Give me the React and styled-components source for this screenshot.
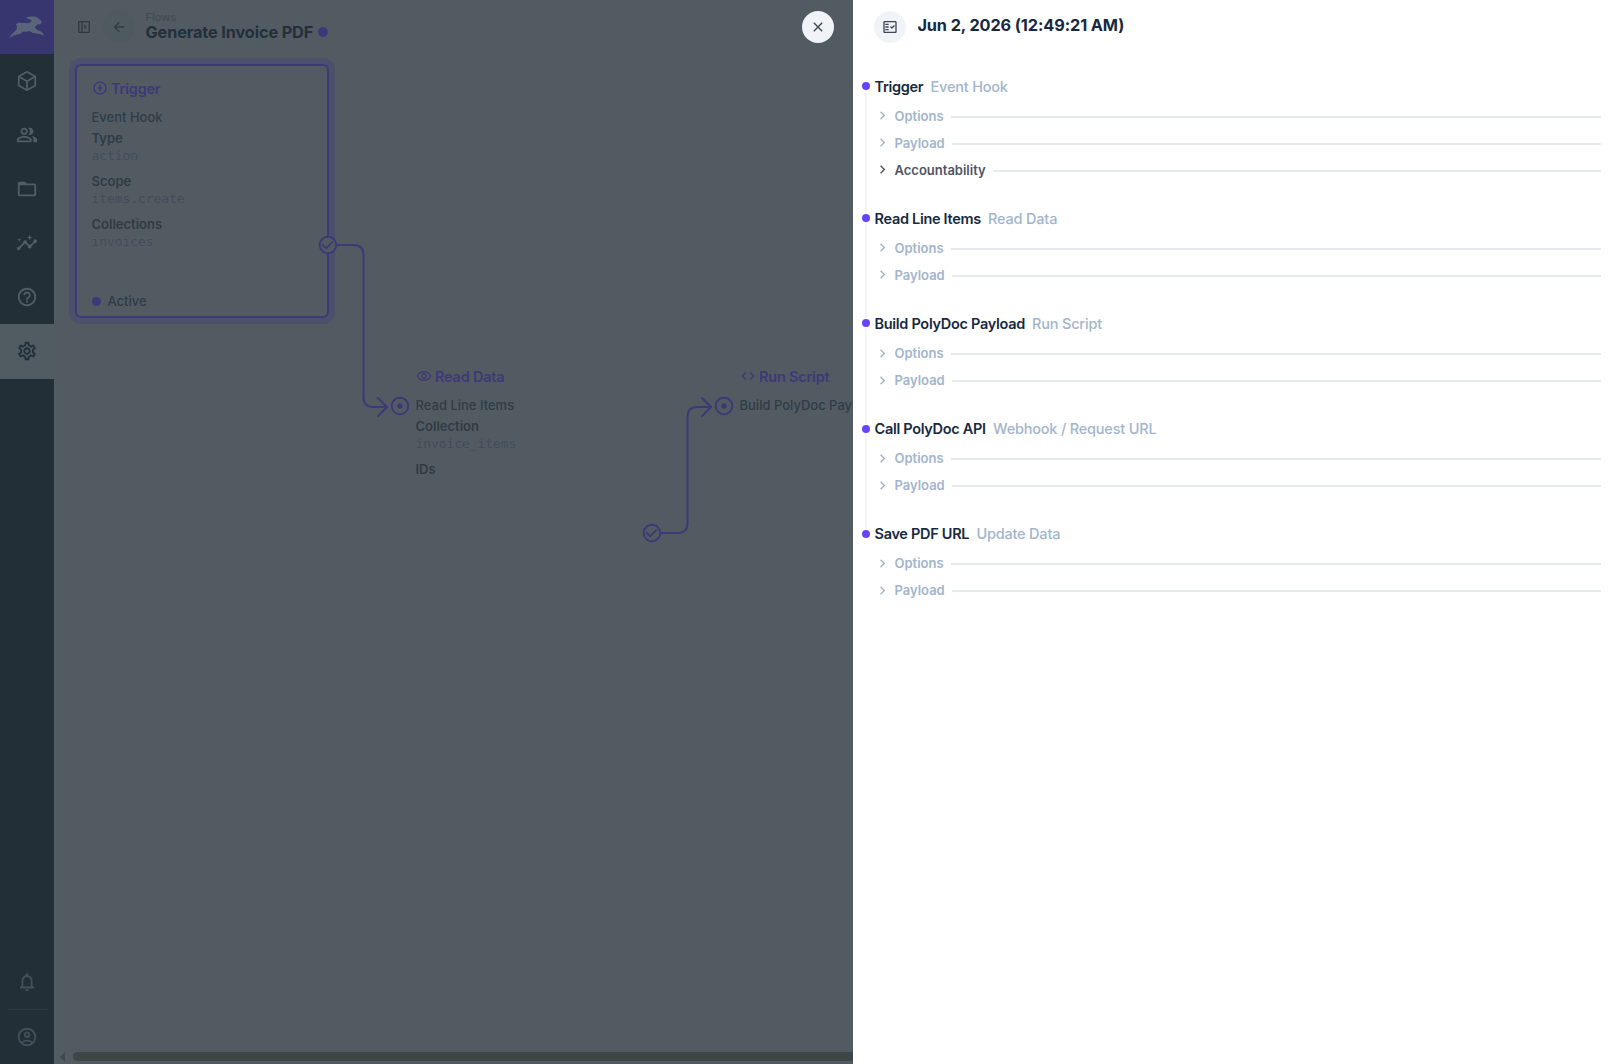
import React from "react"
import styled, { createGlobalStyle } from "styled-components";
import {
  MdOutlinePeopleAlt,
  MdFolderOpen,
  MdInsights,
  MdHelpOutline,
  MdOutlineSettings,
  MdNotificationsNone,
  MdOutlineAccountCircle,
  MdArrowBack,
  MdOutlineRemoveRedEye,
  MdCode,
  MdCheckCircleOutline,
  MdAdjust,
  MdClose,
  MdOutlineFactCheck,
  MdChevronRight,
} from "react-icons/md";

const primary = "#3b3a78"
const pageBackground = "#525b62"
const sansFont = "Inter, sans-serif"
const monoFont = "'DejaVu Sans Mono', monospace"

const steps = [
  { name: "Trigger", type: "Event Hook", rows: ["Options", "Payload", "Accountability"] },
  { name: "Read Line Items", type: "Read Data", rows: ["Options", "Payload"] },
  { name: "Build PolyDoc Payload", type: "Run Script", rows: ["Options", "Payload"] },
  { name: "Call PolyDoc API", type: "Webhook / Request URL", rows: ["Options", "Payload"] },
  { name: "Save PDF URL", type: "Update Data", rows: ["Options", "Payload"] },
]

function RabbitLogo() {
  return (
    <svg width="36" height="23" viewBox="0 0 36 23" fill="#5a657c">
      <path d="M7 8Q9 6.200 12 6.800L19 7.300Q22.500 6.500 23 4.500Q20 2.800 16.800 1.800Q21 0 25 .5Q29 1 30.500 3.500Q33 4.500 32.500 7Q32 8.800 28.500 8.600Q26.500 9.500 26 11.500Q27 13.800 31 15Q34 16 35 19.600Q30 17.800 27 17.600Q23 17 20.500 15Q18 15.800 14.500 15.600Q12 18.400 7 18.800Q3.500 19.500 .4 22Q1.500 18.800 4.500 16.800Q7.500 14.500 8 12.300Q7 11.500 8.200 9.800Q7 10 7 8Z" />
    </svg>
  )
}

function BoxIcon() {
  return (
    <svg width="22" height="22" viewBox="0 0 24 24" fill="none" stroke="currentColor" strokeWidth="1.9" strokeLinejoin="round">
      <path d="M12 2l9 5v10l-9 5-9-5V7z" />
      <path d="M3.500 7.300l8.500 4.900 8.500-4.900M12 12.200V22" />
    </svg>
  )
}

function PanelOpenIcon() {
  return (
    <svg width="16" height="16" viewBox="0 0 24 24" fill="none" stroke="currentColor" strokeWidth="2">
      <rect x="4" y="4" width="16" height="16" rx="1" />
      <path d="M9 4v16" />
      <path d="M12.500 8.200l4 3.800-4 3.800z" fill="currentColor" stroke="none" />
    </svg>
  )
}

function BoltIcon() {
  return (
    <svg width="16" height="16" viewBox="0 0 24 24" fill="none" stroke="currentColor" strokeWidth="2">
      <circle cx="12" cy="12" r="9" />
      <path d="M12.800 5.800v5h3.200l-4.800 7.400v-5H8z" fill="currentColor" stroke="none" />
    </svg>
  )
}

function Connections() {
  return (
    <ConnectionSvg width="799" height="600" viewBox="54 0 799 600">
      <path d="M336 245H353.500Q363.500 245 363.500 255V397Q363.500 407 373.500 407H387" />
      <path d="M378 398L387 407L378 416" />
      <path d="M660 533H677.500Q687.500 533 687.500 523V417Q687.500 407 697.500 407H711" />
      <path d="M702 398L711 407L702 416" />
    </ConnectionSvg>
  )
}

function App() {
  return (
    <Page>
      <GlobalStyle />
      <ModuleBar>
        <Logo><RabbitLogo /></Logo>
        <ModuleButton><BoxIcon /></ModuleButton>
        <ModuleButton><MdOutlinePeopleAlt /></ModuleButton>
        <ModuleButton><MdFolderOpen /></ModuleButton>
        <ModuleButton><MdInsights /></ModuleButton>
        <ModuleButton><MdHelpOutline /></ModuleButton>
        <ModuleButton $active><MdOutlineSettings /></ModuleButton>
        <Spacer />
        <ModuleButton $dim><MdNotificationsNone /></ModuleButton>
        <Divider />
        <ModuleButton $dim><MdOutlineAccountCircle /></ModuleButton>
      </ModuleBar>

      <Main>
        <Header>
          <PanelOpenIcon />
          <BackButton><MdArrowBack /></BackButton>
          <Headline>
            <Breadcrumb>Flows</Breadcrumb>
            <Title>Generate Invoice PDF <Dot $size={10} /></Title>
          </Headline>
        </Header>

        <Canvas>
          <Panel $x={21} $y={64} $trigger>
            <PanelTitle><BoltIcon />Trigger</PanelTitle>
            <PanelName>Event Hook</PanelName>
            <Label>Type</Label>
            <Value>action</Value>
            <Label>Scope</Label>
            <Value>items.create</Value>
            <Label>Collections</Label>
            <Value>invoices</Value>
            <Status><Dot $size={9} />Active</Status>
          </Panel>
          <Panel $x={345} $y={352}>
            <PanelTitle><MdOutlineRemoveRedEye />Read Data</PanelTitle>
            <PanelName>Read Line Items</PanelName>
            <Label>Collection</Label>
            <Value>invoice_items</Value>
            <Label>IDs</Label>
          </Panel>
          <Panel $x={669} $y={352}>
            <PanelTitle><MdCode />Run Script</PanelTitle>
            <PanelName>Build PolyDoc Payload</PanelName>
          </Panel>
          <Connections />
          <Port $x={273.500} $y={245}><MdCheckCircleOutline /></Port>
          <Port $x={345.500} $y={406}><MdAdjust /></Port>
          <Port $x={597.500} $y={533}><MdCheckCircleOutline /></Port>
          <Port $x={669.500} $y={406}><MdAdjust /></Port>
        </Canvas>

        <Scrollbar>
          <ScrollArrow />
          <ScrollThumb />
        </Scrollbar>
        <CloseButton><MdClose /></CloseButton>
      </Main>

      <Drawer>
        <DrawerHeader>
          <DrawerIcon><MdOutlineFactCheck /></DrawerIcon>
          <DrawerTitle>Jun 2, 2026 (12:49:21 AM)</DrawerTitle>
        </DrawerHeader>
        <Timeline>
          {steps.map((step) => (
            <Step key={step.name}>
              <StepHead>
                <StepDot />
                <StepName>{step.name}</StepName>
                <StepType>{step.type}</StepType>
              </StepHead>
              {step.rows.map((row) => (
                <DetailRow key={row} $dark={row === "Accountability"}>
                  <MdChevronRight />
                  <span>{row}</span>
                  <Rule />
                </DetailRow>
              ))}
            </Step>
          ))}
        </Timeline>
      </Drawer>
    </Page>
  )
}

const GlobalStyle = createGlobalStyle`
  body {
    margin:0;
    background:${pageBackground};
  }

  * {
    box-sizing:border-box;
  }
`

const Page = styled.div`
  display:flex;
  width:100%;
  height:100vh;
  overflow:hidden;
  font-family:${sansFont};
`

const ModuleBar = styled.nav`
  display:flex;
  flex-direction:column;
  width:54px;
  height:100%;
  background:#222f36;
  flex-shrink:0;
`

const Logo = styled.div`
  display:flex;
  align-items:center;
  justify-content:center;
  height:54px;
  background:#38366f;
`

const ModuleButton = styled.div`
  display:flex;
  align-items:center;
  justify-content:center;
  height:${(props) => (props.$active ? "55px" : "54px")};
  padding-bottom:${(props) => (props.$active ? "1px" : "0")};
  color:${(props) => (props.$active ? "#222f3a" : props.$dim ? "#43515b" : "#515e67")};
  background:${(props) => (props.$active ? "#515c62" : "transparent")};

  svg {
    width:22px;
    height:22px;
  }
`

const Spacer = styled.div`
  flex:1;
`

const Divider = styled.div`
  height:1px;
  margin:0 6px 0 8px;
  background:#2d3a42;
`

const Main = styled.main`
  position:relative;
  display:flex;
  flex-direction:column;
  flex:1;
  min-width:0;
  overflow:hidden;
  background:${pageBackground};
`

const Header = styled.header`
  display:flex;
  align-items:center;
  height:54px;
  padding-left:22px;
  color:#2f3a43;
`

const BackButton = styled.div`
  display:flex;
  align-items:center;
  justify-content:center;
  width:32px;
  height:32px;
  margin-left:11px;
  border-radius:50%;
  background:#4f5960;
  font-size:16px;
`

const Headline = styled.div`
  margin-left:10.500px;
`

const Breadcrumb = styled.div`
  font-size:11px;
  line-height:10px;
  font-weight:500;
  color:#414d56;
`

const Title = styled.h1`
  display:flex;
  align-items:center;
  gap:5px;
  margin:0;
  font-size:16.300px;
  line-height:20px;
  font-weight:700;
  letter-spacing:-0.13px;
  color:#232f3a;
`

const Dot = styled.span`
  width:${(props) => props.$size}px;
  height:${(props) => props.$size}px;
  border-radius:50%;
  background:${primary};
`

const Canvas = styled.div`
  flex:1;
`

const Panel = styled.section`
  position:absolute;
  left:${(props) => props.$x}px;
  top:${(props) => props.$y}px;
  display:flex;
  flex-direction:column;
  width:254px;
  height:254px;
  padding:13px 15px 6px 14.500px;
  border:2px solid ${(props) => (props.$trigger ? primary : "transparent")};
  border-radius:6px;
  box-shadow:${(props) => (props.$trigger ? "0 0 0 6px #4b516a" : "none")};
  white-space:nowrap;
`

const PanelTitle = styled.div`
  display:flex;
  align-items:center;
  gap:3.500px;
  height:18px;
  margin-bottom:11px;
  font-size:14.500px;
  font-weight:600;
  letter-spacing:-0.22px;
  color:${primary};

  svg {
    width:16px;
    height:16px;
  }
`

const PanelName = styled.div`
  height:21px;
  font-size:13px;
  line-height:18px;
  font-weight:500;
  color:#303c46;
`

const Label = styled.div`
  font-size:13px;
  line-height:18px;
  font-weight:600;
  color:#2f3b45;
`

const Value = styled.div`
  height:25px;
  font-family:${monoFont};
  font-size:12.900px;
  line-height:18px;
  color:#414e59;
`

const Status = styled.div`
  display:flex;
  align-items:center;
  gap:7px;
  margin-top:auto;
  font-size:13px;
  line-height:18px;
  font-weight:500;
  color:#303c46;
`

const ConnectionSvg = styled.svg`
  position:absolute;
  left:0;
  top:0;
  fill:none;
  stroke:${primary};
  stroke-width:2;
  stroke-linecap:round;
`

const Port = styled.div`
  position:absolute;
  left:${(props) => props.$x - 11}px;
  top:${(props) => props.$y - 11}px;
  display:flex;
  color:${primary};
  background:radial-gradient(circle, ${pageBackground} 8px, transparent 9px);

  svg {
    width:22px;
    height:22px;
  }
`

const Scrollbar = styled.div`
  display:flex;
  align-items:flex-start;
  gap:8px;
  height:12px;
  padding-left:6px;
`

const ScrollArrow = styled.div`
  border:5px solid transparent;
  border-left:0;
  border-right:5px solid #3f494c;
`

const ScrollThumb = styled.div`
  flex:1;
  height:9px;
  border-radius:5px 0 0 5px;
  background:#3d4748;
`

const CloseButton = styled.button`
  position:absolute;
  top:11px;
  right:19px;
  display:flex;
  align-items:center;
  justify-content:center;
  width:32px;
  height:32px;
  padding:0;
  border:0;
  border-radius:50%;
  background:#f0f4f9;
  color:#3c4654;
  font-size:16px;
`

const Drawer = styled.aside`
  width:769px;
  height:100%;
  flex-shrink:0;
  background:#ffffff;
`

const DrawerHeader = styled.div`
  display:flex;
  align-items:center;
  height:54px;
  padding-left:21.400px;
`

const DrawerIcon = styled.div`
  display:flex;
  align-items:center;
  justify-content:center;
  width:32px;
  height:32px;
  border-radius:50%;
  background:#f0f4f9;
  color:#3c4654;
  font-size:16px;
`

const DrawerTitle = styled.h2`
  margin:0 0 4px 11px;
  font-size:16.300px;
  line-height:20px;
  font-weight:700;
  letter-spacing:-0.1px;
  color:#172940;
`

const Timeline = styled.div`
  padding:19px 21px 0 21.500px;
`

const Step = styled.div`
  position:relative;
  padding-bottom:22px;

  &:not(:last-child)::before {
    content:"";
    position:absolute;
    left:-9.500px;
    top:17px;
    bottom:-8px;
    width:2px;
    background:#f2f4f7;
  }
`

const StepHead = styled.div`
  position:relative;
  display:flex;
  align-items:center;
  gap:7.200px;
  height:29.200px;
  padding-bottom:3px;
  font-size:14.500px;
  font-weight:600;
  letter-spacing:-0.3px;
`

const StepDot = styled.span`
  position:absolute;
  left:-12.500px;
  top:9px;
  width:8px;
  height:8px;
  border-radius:50%;
  background:#6644ff;
`

const StepName = styled.span`
  color:#172940;
`

const StepType = styled.span`
  font-weight:500;
  letter-spacing:-0.2px;
  color:#a2b5cd;
`

const DetailRow = styled.div`
  display:flex;
  align-items:center;
  height:27px;
  font-size:13px;
  font-weight:600;
  color:${(props) => (props.$dark ? "#4f5464" : "#a2b5cd")};

  svg {
    width:17px;
    height:17px;
    margin:0 4px 0 -1px;
  }
`

const Rule = styled.div`
  flex:1;
  height:2px;
  margin:2px 0 0 7px;
  background:#e6e9ed;
`

export default App
